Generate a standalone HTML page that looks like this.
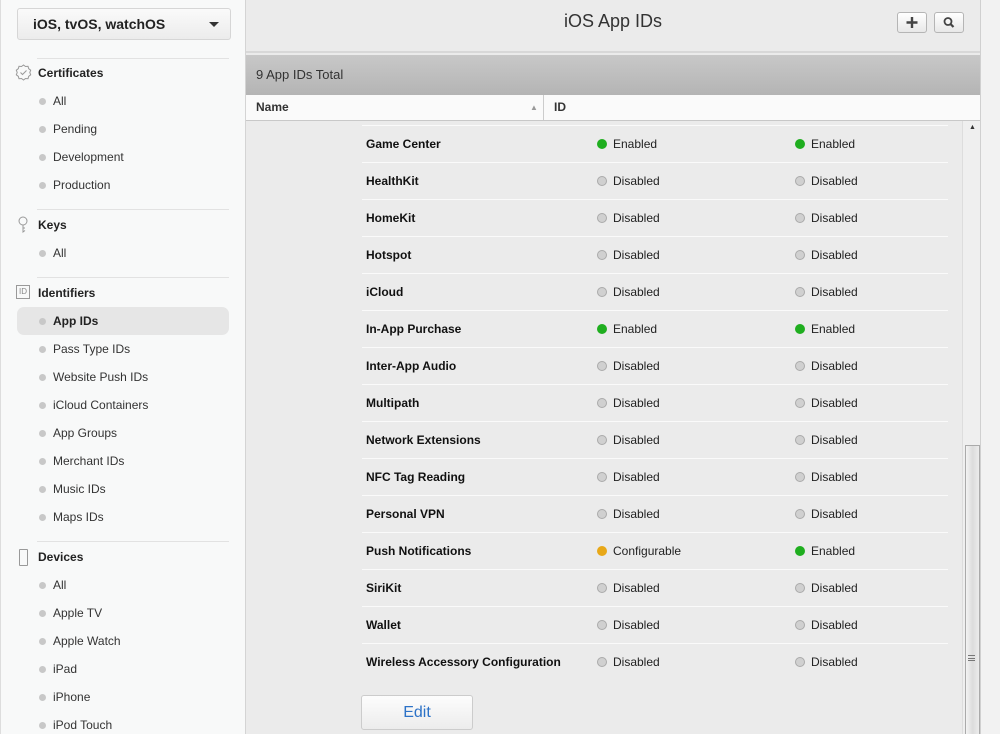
<!DOCTYPE html>
<html><head><style>
*{margin:0;padding:0;box-sizing:border-box}
body{width:1000px;height:734px;overflow:hidden;background:#ebebeb;font-family:"Liberation Sans",Arial,sans-serif;font-size:12px;color:#222;position:relative}
#side{position:absolute;left:0;top:0;width:246px;height:734px;background:#f8f9f9;border-right:1px solid #d4d4d4;box-shadow:inset 1px 0 0 #ddd}
.sel{position:absolute;left:17px;top:8px;width:214px;height:32px;border:1px solid #d6d6d6;border-radius:3px;background:linear-gradient(#fafafa,#ececec);font-weight:bold;font-size:14px;line-height:30px;padding-left:15px;color:#222}
.sel:after{content:"";position:absolute;right:11px;top:13px;border-left:5px solid transparent;border-right:5px solid transparent;border-top:5px solid #333}
.hr{position:absolute;left:37px;width:192px;height:1px;background:#e2e2e2}
.h{position:absolute;left:38px;font-weight:bold;font-size:12px;color:#222}
.it{position:absolute;left:53px;font-size:12px;color:#333}
.it:before{content:"";position:absolute;left:-14px;top:4px;width:7px;height:7px;border-radius:50%;background:#c8c8c8}
.ic{position:absolute;left:15px}
#top{position:absolute;left:246px;top:0;width:734px;height:53px;border-bottom:2px solid #d8d8d8}
#top h1{font-weight:normal;font-size:18px;text-align:center;line-height:42px;color:#333}
.btn{position:absolute;top:12px;width:30px;height:21px;border:1px solid #b5b5b5;border-radius:3px;background:linear-gradient(#fff,#e8e8e8)}
#bar{position:absolute;left:246px;top:55px;width:734px;height:40px;background:linear-gradient(#c8c8c8,#b4b4b4);font-size:13px;color:#333;line-height:40px;padding-left:10px}
#th{position:absolute;left:246px;top:95px;width:734px;height:26px;background:#fafafa;border-bottom:1px solid #c8c8c8;font-weight:bold;color:#333;line-height:25px}
#right{position:absolute;left:980px;top:0;width:20px;height:734px;background:#f2f2f2;border-left:1px solid #d0d0d0}
#track{position:absolute;left:962px;top:121px;width:18px;height:613px;background:#efefef;border-left:1px solid #ddd}
#thumb{position:absolute;left:965px;top:445px;width:15px;height:289px;border:1px solid #aaa;border-bottom:0;background:linear-gradient(90deg,#f4f4f4,#dcdcdc,#ececec)}
.row{position:absolute;left:362px;width:586px;height:37px;border-top:1px solid #fafafa;line-height:36px}
.row b{position:absolute;left:4px;font-size:12px;color:#111}
.s{position:absolute;font-size:12px;color:#222}
.s:before{content:"";position:absolute;left:-16px;top:13px;width:10px;height:10px;border-radius:50%}
.d:before{background:#d0d0d0;border:1px solid #aaa;box-sizing:border-box}
.e:before{background:#1fae1f}
.c:before{background:#e8a818}
.a{left:251px}.b{left:449px}
#edit{position:absolute;left:361px;top:695px;width:112px;height:35px;border:1px solid #ccc;border-radius:3px;background:linear-gradient(#fdfdfd,#ececec);color:#2c72c7;font-size:16px;text-align:center;line-height:33px}
</style></head><body>
<div id="side">
<div class="sel">iOS, tvOS, watchOS</div>
<div class="hr" style="top:58px"></div>
<svg class="ic" style="top:64px" width="17" height="17" viewBox="0 0 17 17"><path d="M8.5 1l2 1.5 2.5-.2.7 2.4 2 1.5-.9 2.3.9 2.3-2 1.5-.7 2.4-2.5-.2-2 1.5-2-1.5-2.5.2-.7-2.4-2-1.5.9-2.3-.9-2.3 2-1.5.7-2.4 2.5.2z" fill="none" stroke="#999"/><path d="M5.5 8.5l2 2 4-4" fill="none" stroke="#999"/></svg>
<div class="h" style="top:66px">Certificates</div>
<div class="it" style="top:94px">All</div>
<div class="it" style="top:122px">Pending</div>
<div class="it" style="top:150px">Development</div>
<div class="it" style="top:178px">Production</div>
<div class="hr" style="top:209px"></div>
<svg class="ic" style="top:216px;left:17px" width="12" height="18" viewBox="0 0 12 18"><circle cx="6" cy="5" r="4" fill="none" stroke="#999"/><path d="M6 9v7l2-1.5M6 12h2" fill="none" stroke="#999"/></svg>
<div class="h" style="top:218px">Keys</div>
<div class="it" style="top:246px">All</div>
<div class="hr" style="top:277px"></div>
<div class="ic" style="top:285px;left:16px;width:14px;height:14px;border:1px solid #999;font-size:8px;color:#888;text-align:center;line-height:12px">ID</div>
<div class="h" style="top:286px">Identifiers</div>
<div style="position:absolute;left:17px;top:307px;width:212px;height:28px;background:#e6e6e6;border-radius:7px"></div>
<div class="it" style="top:314px;font-weight:bold;color:#222">App IDs</div>
<div class="it" style="top:342px">Pass Type IDs</div>
<div class="it" style="top:370px">Website Push IDs</div>
<div class="it" style="top:398px">iCloud Containers</div>
<div class="it" style="top:426px">App Groups</div>
<div class="it" style="top:454px">Merchant IDs</div>
<div class="it" style="top:482px">Music IDs</div>
<div class="it" style="top:510px">Maps IDs</div>
<div class="hr" style="top:541px"></div>
<div class="ic" style="top:549px;left:19px;width:9px;height:17px;border:1px solid #999;border-radius:1px"></div>
<div class="h" style="top:550px">Devices</div>
<div class="it" style="top:578px">All</div>
<div class="it" style="top:606px">Apple TV</div>
<div class="it" style="top:634px">Apple Watch</div>
<div class="it" style="top:662px">iPad</div>
<div class="it" style="top:690px">iPhone</div>
<div class="it" style="top:718px">iPod Touch</div>
</div>
<div id="top"><h1>iOS App IDs</h1>
<div class="btn" style="left:651px"><svg width="28" height="19"><path d="M14 4v11M8.5 9.5h11" stroke="#444" stroke-width="2.4"/></svg></div>
<div class="btn" style="left:688px"><svg width="28" height="19"><circle cx="13" cy="8.5" r="3.5" fill="none" stroke="#444" stroke-width="1.8"/><path d="M15.5 11l3 3" stroke="#444" stroke-width="2.2"/></svg></div>
</div>
<div id="bar">9 App IDs Total</div>
<div id="th"><span style="position:absolute;left:10px">Name</span><span style="position:absolute;left:284px;top:0;color:#999;font-size:8px;font-weight:normal">▲</span><span style="position:absolute;left:297px;top:0;width:1px;height:25px;background:#ccc"></span><span style="position:absolute;left:308px">ID</span></div>
<div id="track"></div><div id="thumb"></div>
<div style="position:absolute;left:969px;top:124px;font-size:7px;color:#333">▲</div>
<div style="position:absolute;left:968px;top:655px;width:7px;height:6px;border-top:1px solid #777;border-bottom:1px solid #777"><div style="margin-top:2px;height:1px;background:#777"></div></div>
<div id="right"></div>
<div class="row" style="top:125px"><b>Game Center</b><span class="s e a">Enabled</span><span class="s e b">Enabled</span></div>
<div class="row" style="top:162px"><b>HealthKit</b><span class="s d a">Disabled</span><span class="s d b">Disabled</span></div>
<div class="row" style="top:199px"><b>HomeKit</b><span class="s d a">Disabled</span><span class="s d b">Disabled</span></div>
<div class="row" style="top:236px"><b>Hotspot</b><span class="s d a">Disabled</span><span class="s d b">Disabled</span></div>
<div class="row" style="top:273px"><b>iCloud</b><span class="s d a">Disabled</span><span class="s d b">Disabled</span></div>
<div class="row" style="top:310px"><b>In-App Purchase</b><span class="s e a">Enabled</span><span class="s e b">Enabled</span></div>
<div class="row" style="top:347px"><b>Inter-App Audio</b><span class="s d a">Disabled</span><span class="s d b">Disabled</span></div>
<div class="row" style="top:384px"><b>Multipath</b><span class="s d a">Disabled</span><span class="s d b">Disabled</span></div>
<div class="row" style="top:421px"><b>Network Extensions</b><span class="s d a">Disabled</span><span class="s d b">Disabled</span></div>
<div class="row" style="top:458px"><b>NFC Tag Reading</b><span class="s d a">Disabled</span><span class="s d b">Disabled</span></div>
<div class="row" style="top:495px"><b>Personal VPN</b><span class="s d a">Disabled</span><span class="s d b">Disabled</span></div>
<div class="row" style="top:532px"><b>Push Notifications</b><span class="s c a">Configurable</span><span class="s e b">Enabled</span></div>
<div class="row" style="top:569px"><b>SiriKit</b><span class="s d a">Disabled</span><span class="s d b">Disabled</span></div>
<div class="row" style="top:606px"><b>Wallet</b><span class="s d a">Disabled</span><span class="s d b">Disabled</span></div>
<div class="row" style="top:643px"><b>Wireless Accessory Configuration</b><span class="s d a">Disabled</span><span class="s d b">Disabled</span></div>
<div id="edit">Edit</div>
</body></html>
